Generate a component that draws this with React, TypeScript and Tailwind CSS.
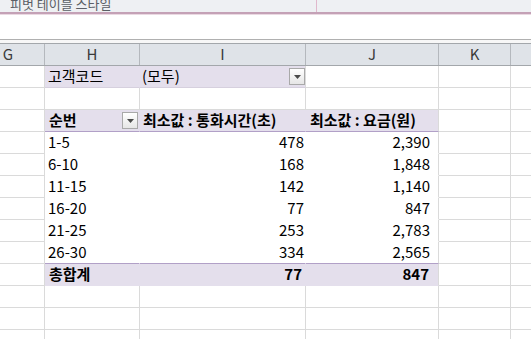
import React from 'react';

const font = { fontFamily: '"Noto Sans CJK KR", "Noto Sans", sans-serif' };

// column widths include the 1px right gridline
const W = {
  G: 'w-[73px]',
  H: 'w-[95px]',
  I: 'w-[166px]',
  J: 'w-[133px]',
  K: 'w-[72px]',
  L: 'w-[100px]',
};

const DropButton: React.FC<{ className?: string }> = ({ className }) => (
  <div
    className={`w-[16px] h-[17px] border border-[#a9a9a9] bg-gradient-to-b from-white to-[#e6e6e6] flex items-center justify-center ${className ?? ''}`}
  >
    <svg width="7" height="4" viewBox="0 0 7 4">
      <polygon points="0,0 7,0 3.5,4" fill="#4a4a4a" />
    </svg>
  </div>
);

const Cell: React.FC<{ w: string; className?: string; children?: React.ReactNode }> = ({ w, className, children }) => (
  <div className={`${w} shrink-0 h-full flex items-center border-r border-b ${className ?? 'border-[#dadada] bg-white'}`}>
    {children}
  </div>
);

const Row: React.FC<{ children: React.ReactNode }> = ({ children }) => (
  <div className="flex h-[22px] ml-[-28px]">{children}</div>
);

const Edge: React.FC = () => (
  <>
    <Cell w={W.K} />
    <Cell w={W.L} />
  </>
);

const EmptyRow: React.FC = () => (
  <Row>
    <Cell w={W.G} />
    <Cell w={W.H} />
    <Cell w={W.I} />
    <Cell w={W.J} />
    <Edge />
  </Row>
);

const purple = 'bg-[#e4dfec]';

const data = [
  { k: '1-5', a: '478', b: '2,390' },
  { k: '6-10', a: '168', b: '1,848' },
  { k: '11-15', a: '142', b: '1,140' },
  { k: '16-20', a: '77', b: '847' },
  { k: '21-25', a: '253', b: '2,783' },
  { k: '26-30', a: '334', b: '2,565' },
];

const HeaderCell: React.FC<{ w: string; label: string }> = ({ w, label }) => (
  <div className={`${w} shrink-0 h-full flex items-center justify-center border-r border-[#b4b8bd] text-[#3a3a3a]`}>
    {label}
  </div>
);

export default function App() {
  return (
    <div className="w-[531px] h-[339px] overflow-hidden bg-white text-[15px] text-black" style={font}>
      {/* ribbon strip, cut off at the top */}
      <div className="h-[12px] bg-[#eef0f3] flex overflow-hidden">
        <div className="w-[317px] shrink-0 border-r border-[#e0b8cc] overflow-hidden">
          <div className="pl-[10px] mt-[-3px] text-[13px] leading-[13px] text-[#5b5f66] whitespace-nowrap">피벗 테이블 스타일</div>
        </div>
        <div className="flex-1" />
      </div>
      <div className="h-[2px] bg-[#c4a1b6]" />
      <div className="h-[1px] bg-[#ead9e2]" />

      {/* formula bar area */}
      <div className="h-[24px] bg-white" />
      <div className="h-[1px] bg-[#b0b0b0]" />
      <div className="h-[3px] bg-[#f7f7f7]" />

      {/* column headers */}
      <div className="flex h-[23px] ml-[-28px] bg-[#dfe3e8] border-t border-b border-[#a3a7ab]">
        <HeaderCell w={W.G} label="G" />
        <HeaderCell w={W.H} label="H" />
        <HeaderCell w={W.I} label="I" />
        <HeaderCell w={W.J} label="J" />
        <HeaderCell w={W.K} label="K" />
        <HeaderCell w={W.L} label="" />
      </div>

      {/* report filter */}
      <Row>
        <Cell w={W.G} />
        <Cell w={W.H} className={`${purple} border-r-transparent border-b-[#d6d0de]`}>
          <span className="pl-[3px]">고객코드</span>
        </Cell>
        <Cell w={W.I} className={`${purple} border-r-[#dadada] border-b-[#d6d0de] justify-between`}>
          <span className="pl-[2px]">(모두)</span>
          <DropButton />
        </Cell>
        <Cell w={W.J} />
        <Edge />
      </Row>

      <EmptyRow />

      {/* pivot header */}
      <Row>
        <Cell w={W.G} />
        <Cell w={W.H} className={`${purple} border-r-transparent border-b-[#b1a0c7] justify-between font-bold`}>
          <span className="pl-[4px]">순번</span>
          <DropButton className="mr-[1px]" />
        </Cell>
        <Cell w={W.I} className={`${purple} border-r-transparent border-b-[#b1a0c7] font-bold`}>
          <span className="pl-[3px] whitespace-pre">최소값 : 통화시간(초)</span>
        </Cell>
        <Cell w={W.J} className={`${purple} border-r-[#dadada] border-b-[#b1a0c7] font-bold`}>
          <span className="pl-[4px] whitespace-pre">최소값 : 요금(원)</span>
        </Cell>
        <Edge />
      </Row>

      {data.map((d, i) => {
        const last = i === data.length - 1;
        const b = last ? 'border-b-[#b1a0c7]' : 'border-b-transparent';
        return (
          <Row key={d.k}>
            <Cell w={W.G} />
            <Cell w={W.H} className={`bg-white border-r-transparent ${b}`}>
              <span className="pl-[3px]">{d.k}</span>
            </Cell>
            <Cell w={W.I} className={`bg-white border-r-transparent ${b} justify-end`}>
              <span className="pr-[1px]">{d.a}</span>
            </Cell>
            <Cell w={W.J} className={`bg-white border-r-[#dadada] ${b} justify-end`}>
              <span className="pr-[8px]">{d.b}</span>
            </Cell>
            <Edge />
          </Row>
        );
      })}

      {/* grand total */}
      <Row>
        <Cell w={W.G} />
        <Cell w={W.H} className={`${purple} border-r-transparent border-b-transparent font-bold`}>
          <span className="pl-[4px]">총합계</span>
        </Cell>
        <Cell w={W.I} className={`${purple} border-r-transparent border-b-transparent justify-end font-bold`}>
          <span className="pr-[3px]">77</span>
        </Cell>
        <Cell w={W.J} className={`${purple} border-r-[#dadada] border-b-transparent justify-end font-bold`}>
          <span className="pr-[9px]">847</span>
        </Cell>
        <Edge />
      </Row>

      <EmptyRow />
      <EmptyRow />
      <EmptyRow />
    </div>
  );
}
